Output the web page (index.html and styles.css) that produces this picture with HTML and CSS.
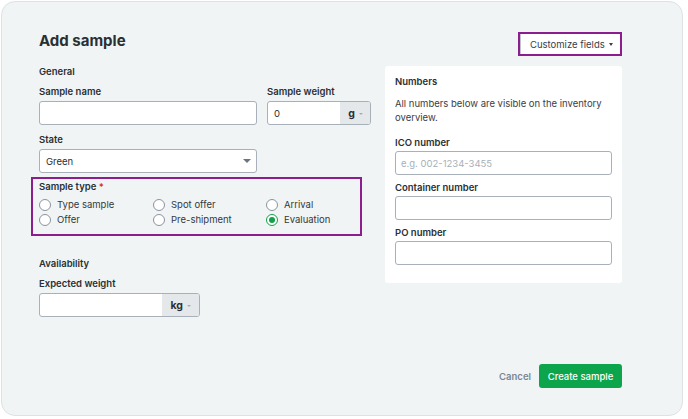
FILE: index.html
```html
<!DOCTYPE html>
<html>
<head>
<meta charset="utf-8">
<link rel="stylesheet" href="styles.css">
</head>
<body>
<div class="card">
  <div class="cols">
    <div class="left">
      <h1 class="title">Add sample</h1>
      <div class="section">General</div>
      <div class="row2">
        <div class="field name">
          <label class="label">Sample name</label>
          <div class="input"></div>
        </div>
        <div class="field weight">
          <label class="label">Sample weight</label>
          <div class="input addon-input">
            <span class="val">0</span>
            <span class="addon">g <span class="caret-s"></span></span>
          </div>
        </div>
      </div>
      <div class="field state">
        <label class="label">State</label>
        <div class="input select"><span class="val">Green</span><span class="caret"></span></div>
      </div>
      <div class="highlight type-group">
        <div class="label">Sample type <span class="req">*</span></div>
        <div class="radios">
          <div class="radio"><span class="circle"></span>Type sample</div>
          <div class="radio"><span class="circle"></span>Spot offer</div>
          <div class="radio"><span class="circle"></span>Arrival</div>
          <div class="radio"><span class="circle"></span>Offer</div>
          <div class="radio"><span class="circle"></span>Pre-shipment</div>
          <div class="radio"><span class="circle on"></span>Evaluation</div>
        </div>
      </div>
      <div class="section avail">Availability</div>
      <div class="field expected">
        <label class="label">Expected weight</label>
        <div class="input addon-input">
          <span class="val"></span>
          <span class="addon kg">kg <span class="caret-s"></span></span>
        </div>
      </div>
    </div>
    <div class="right">
      <div class="btn-row">
        <button class="customize">Customize fields <span class="caret-d"></span></button>
      </div>
      <div class="panel">
        <div class="section">Numbers</div>
        <p class="desc">All numbers below are visible on the inventory overview.</p>
        <div class="field first">
          <label class="label">ICO number</label>
          <div class="input"><span class="ph">e.g. 002-1234-3455</span></div>
        </div>
        <div class="field">
          <label class="label">Container number</label>
          <div class="input"></div>
        </div>
        <div class="field">
          <label class="label">PO number</label>
          <div class="input"></div>
        </div>
      </div>
    </div>
  </div>
  <div class="footer">
    <span class="cancel">Cancel</span>
    <button class="create">Create sample</button>
  </div>
</div>
</body>
</html>
```

FILE: styles.css
```css
* { box-sizing: border-box; }
html, body { margin: 0; padding: 0; background: #ffffff; }
body {
  font-family: Inter, "Noto Sans", sans-serif;
  color: #2a2f34;
  font-size: 9.5px;
  width: 688px;
  height: 419px;
  overflow: hidden;
}
.card {
  margin: 1px 0 0 1px;
  width: 682px;
  height: 415px;
  border: 1px solid #dde2e5;
  border-radius: 14px;
  background: #f1f4f5;
  padding: 0 60px 0 37px;
  display: flex;
  flex-direction: column;
}
.cols {
  display: grid;
  grid-template-columns: 332px 237px;
  column-gap: 14px;
}
.title {
  margin: 28px 0 0;
  font-size: 15px;
  line-height: 22px;
  font-weight: 700;
  color: #2a2f34;
}
.section {
  font-weight: 600;
  font-size: 9.5px;
  line-height: 14px;
  margin-top: 13px;
}
.label {
  display: block;
  font-weight: 600;
  font-size: 9.5px;
  line-height: 14px;
}
.row2 {
  display: flex;
  gap: 10px;
  margin-top: 6px;
}
.field .input { margin-top: 2px; }
.name { width: 218px; }
.weight { width: 104px; }
.input {
  height: 24px;
  border: 1px solid #a8b1b9;
  border-radius: 3px;
  background: #fff;
  display: flex;
  align-items: center;
  overflow: hidden;
}
.val { padding-left: 6px; flex: 1; font-size: 9.5px; }
.ph { padding-left: 5px; color: #a6b0b9; font-size: 9.5px; }
.addon {
  height: 100%;
  background: #e5e8eb;
  display: flex;
  align-items: center;
  gap: 4px;
  padding: 0 7px 0 8px;
  font-weight: 700;
  font-size: 10.5px;
}
.addon.kg { padding: 0 8px 0 9px; }
.caret-s {
  width: 0; height: 0;
  border-left: 2px solid transparent;
  border-right: 2px solid transparent;
  border-top: 2px solid #a5adb5;
  margin-top: 1px;
}
.state { margin-top: 8px; width: 218px; }
.select { justify-content: space-between; }
.caret {
  width: 0; height: 0;
  border-left: 4px solid transparent;
  border-right: 4px solid transparent;
  border-top: 4px solid #6c747c;
  margin-right: 5px;
}
.highlight {
  border: 2px solid #8c1d8f;
}
.type-group {
  margin: 4px 0 0 -8px;
  width: 331px;
  padding: 1px 6px 7px 6px;
}
.req { color: #d9232e; }
.radios {
  display: grid;
  grid-template-columns: 114px 113px 1fr;
  margin-top: 3px;
}
.radio {
  display: flex;
  align-items: center;
  gap: 6px;
  height: 15px;
  font-size: 9.5px;
  color: #33393f;
}
.circle {
  width: 12px; height: 12px;
  border: 1px solid #8a949d;
  border-radius: 50%;
  background: #fff;
  display: flex;
  align-items: center;
  justify-content: center;
}
.circle.on { border-color: #12a048; }
.circle.on::after {
  content: "";
  width: 6px; height: 6px;
  border-radius: 50%;
  background: #12a048;
}
.avail { margin-top: 21px; }
.expected { margin-top: 6px; width: 161px; }
.btn-row {
  display: flex;
  justify-content: flex-end;
  margin-top: 30px;
}
.customize {
  height: 24px;
  width: 104px;
  border: 2px solid #8c1d8f;
  background: #fff;
  box-shadow: inset 1px 0 0 #bfc5ca;
  font-family: inherit;
  font-size: 9.5px;
  color: #3a4047;
  padding: 0 0 0 10px;
  display: flex;
  align-items: center;
  gap: 4px;
  border-radius: 0;
}
.caret-d {
  width: 0; height: 0;
  border-left: 2.5px solid transparent;
  border-right: 2.5px solid transparent;
  border-top: 3px solid #3a4047;
}
.panel {
  margin-top: 10px;
  background: #fff;
  border-radius: 3px;
  padding: 9px 10px 18px;
}
.panel .section { margin-top: 0; }
.desc {
  margin: 8px 0 0;
  line-height: 14px;
  font-size: 9.5px;
  color: #3a4047;
}
.panel .field { margin-top: 6px; }
.panel .field .input { margin-top: 1px; }
.panel .field.first { margin-top: 11px; }
.footer {
  margin-top: auto;
  margin-bottom: 27px;
  display: flex;
  justify-content: flex-end;
  align-items: center;
  gap: 8px;
}
.cancel {
  color: #7a8794;
  font-weight: 600;
  font-size: 9.5px;
}
.create {
  height: 24px;
  width: 83px;
  border: none;
  border-radius: 3px;
  background: #0ca54b;
  color: #fff;
  font-family: inherit;
  font-size: 9.5px;
  font-weight: 500;
  padding: 0;
}
```
